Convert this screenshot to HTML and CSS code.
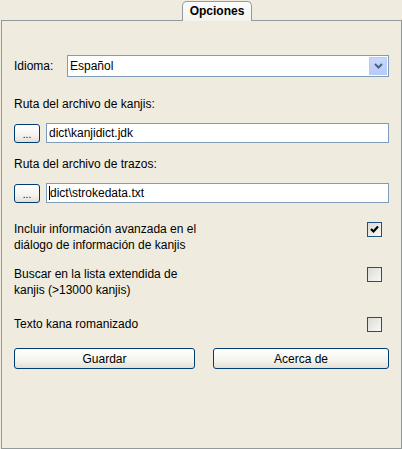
FILE: index.html
```html
<!DOCTYPE html>
<html lang="es">
<head>
<meta charset="utf-8">
<title>Opciones</title>
<link rel="stylesheet" href="styles.css">
</head>
<body>
<div class="tabs">
  <div class="tab">Opciones</div>
</div>
<div class="panel">
  <div class="row combo-row">
    <span class="label">Idioma:</span>
    <div class="combo">
      <span class="combo-value">Español</span>
      <span class="combo-btn">
        <svg width="9" height="6" viewBox="0 0 9 6"><path d="M1 1 L4.5 4.5 L8 1" fill="none" stroke="#4d6185" stroke-width="2"/></svg>
      </span>
    </div>
  </div>

  <div class="field-label first">Ruta del archivo de kanjis:</div>
  <div class="row file-row">
    <button class="btn small">...</button>
    <div class="text-field">dict\kanjidict.jdk</div>
  </div>

  <div class="field-label">Ruta del archivo de trazos:</div>
  <div class="row file-row">
    <button class="btn small">...</button>
    <div class="text-field"><span class="caret"></span>dict\strokedata.txt</div>
  </div>

  <div class="check-row g1">
    <div class="check-text">Incluir información avanzada en el<br>diálogo de información de kanjis</div>
    <span class="checkbox">
      <svg width="13" height="13" viewBox="0 0 13 13"><path d="M3 6 L5.5 8.5 L10 3.5" fill="none" stroke="#000" stroke-width="2.2"/></svg>
    </span>
  </div>
  <div class="check-row g2">
    <div class="check-text">Buscar en la lista extendida de<br>kanjis (&gt;13000 kanjis)</div>
    <span class="checkbox"></span>
  </div>
  <div class="check-row g3">
    <div class="check-text">Texto kana romanizado</div>
    <span class="checkbox"></span>
  </div>

  <div class="actions">
    <button class="btn">Guardar</button>
    <button class="btn">Acerca de</button>
  </div>
</div>
</body>
</html>
```
FILE: styles.css
```css
* { box-sizing: border-box; }
html, body {
  margin: 0;
  padding: 0;
  background: #efecdf;
  font-family: "Liberation Sans", Arial, sans-serif;
  font-size: 12px;
  color: #000;
}
.tabs {
  height: 20px;
  display: flex;
  position: relative;
  z-index: 1;
}
.tab {
  margin-left: 182px;
  margin-top: 1px;
  width: 70px;
  height: 20px;
  border: 1px solid #919b9c;
  border-bottom: none;
  border-radius: 5px 5px 0 0;
  background: linear-gradient(#fcfcfe, #f4f3ee);
  font-weight: bold;
  text-align: center;
  line-height: 18px;
}
.panel {
  margin-left: 1px;
  width: 401px;
  height: 429px;
  border: 1px solid #919b9c;
  padding: 34px 12px 0 12px;
  background: #efecdf;
}
.row { display: flex; align-items: center; }
.combo-row { height: 22px; }
.combo-row .label { width: 53px; }
.combo {
  flex: 1;
  height: 22px;
  border: 1px solid #7f9db9;
  background: #fff;
  display: flex;
  align-items: stretch;
}
.combo-value { flex: 1; padding-left: 2px; line-height: 20px; }
.combo-btn {
  width: 18px;
  margin: 1px;
  background: linear-gradient(#c9d8fc, #b7cbf9);
  border: 1px solid #b9ccf5;
  display: flex;
  align-items: center;
  justify-content: center;
}
.field-label { line-height: 14px; margin-top: 14px; }
.field-label.first { margin-top: 20px; }
.file-row { margin-top: 12px; height: 20px; gap: 6px; }
.btn {
  font-family: inherit;
  font-size: 12px;
  color: #000;
  border: 1px solid #003c74;
  border-radius: 3px;
  background: linear-gradient(#ffffff, #f4f3ee 60%, #e3e0d4);
  padding: 0;
  height: 21px;
}
.btn.small {
  width: 26px;
  height: 19px;
  font-size: 10px;
  line-height: 12px;
  padding-top: 4px;
}
.text-field {
  flex: 1;
  height: 20px;
  border: 1px solid #7f9db9;
  background: #fff;
  line-height: 18px;
  padding-left: 2px;
  display: flex;
  align-items: center;
}
.caret {
  display: inline-block;
  width: 1px;
  height: 14px;
  background: #000;
}
.check-row {
  display: flex;
  justify-content: space-between;
  align-items: flex-start;
  padding-right: 7px;
}
.check-text { line-height: 16px; }
.g1 { margin-top: 18px; }
.g2 { margin-top: 13px; }
.g3 { margin-top: 18px; }
.checkbox {
  width: 15px;
  height: 15px;
  border: 1px solid #1c5180;
  background: linear-gradient(135deg, #dcdbd5, #f8f8f6);
  margin-top: 1px;
  display: flex;
  align-items: center;
  justify-content: center;
}
.actions {
  margin-top: 16px;
  display: grid;
  grid-template-columns: 181px 176px;
  column-gap: 18px;
}
```
